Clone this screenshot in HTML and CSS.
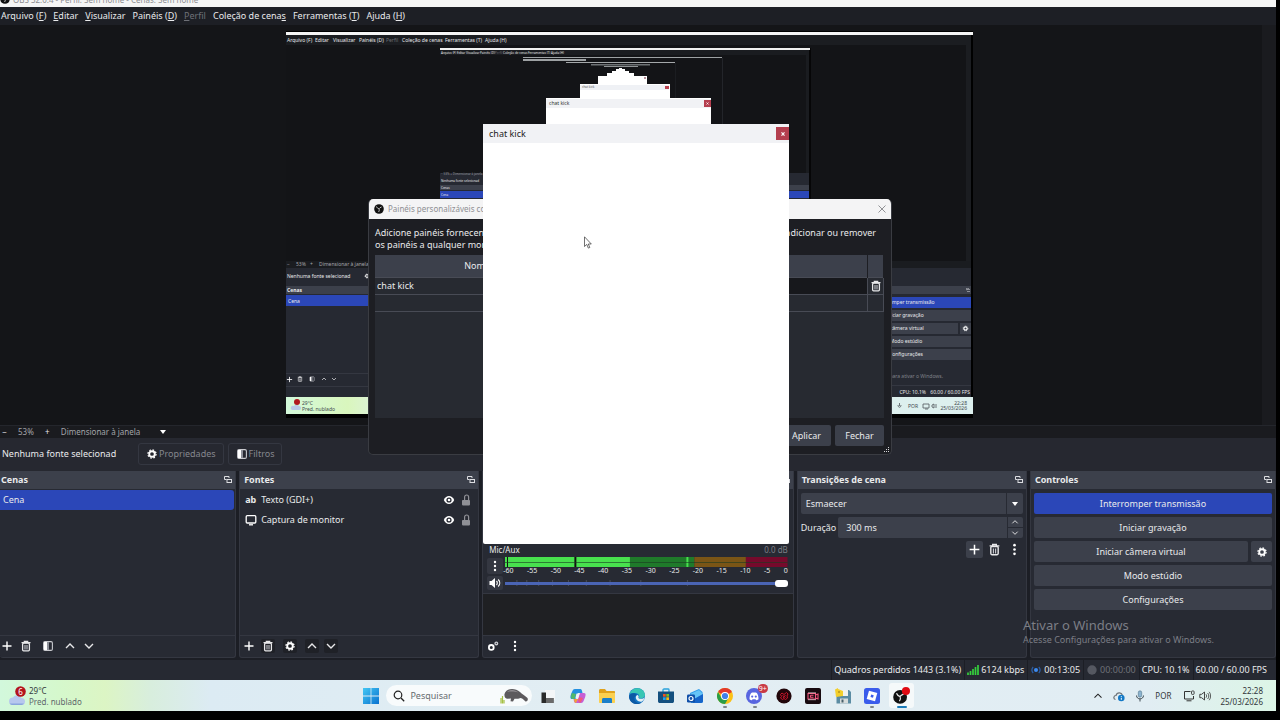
FILE: index.html
```html
<!DOCTYPE html>
<html lang="pt-BR">
<head>
    <meta charset="UTF-8">
    <meta name="viewport" content="width=device-width, initial-scale=1.0">
    <title>OBS</title>
    <link rel="stylesheet" href="styles.css">
</head>
<body>
    <svg class="sprite" aria-hidden="true">
        <symbol id="i-plus" viewBox="0 0 12 12"><path d="M6 1.500v9M1.500 6h9" stroke="#fff" stroke-width="1.400" fill="none"/></symbol>
        <symbol id="i-trash" viewBox="0 0 12 12"><path d="M1.500 2.600h9M4.300 2.400V1.300h3.400v1.100" stroke="#e8e8ea" stroke-width="1.200" fill="none"/><rect x="2.600" y="3.200" width="6.800" height="7.600" rx="1" fill="none" stroke="#e8e8ea" stroke-width="1.300"/><path d="M5 5v4.600M7 5v4.600" stroke="#c4c5ca" stroke-width="1.100"/></symbol>
        <symbol id="i-filter" viewBox="0 0 12 12"><rect x="1.600" y="1.600" width="8.800" height="8.800" rx="1.400" fill="none" stroke="#c9cacf" stroke-width="1.100"/><rect x="2" y="2" width="3" height="8" fill="#fff"/><rect x="5" y="2" width="2" height="8" fill="#8d9099"/></symbol>
        <symbol id="i-up" viewBox="0 0 12 12"><path d="M2 8l4-4 4 4" stroke="#e8e8ea" stroke-width="1.400" fill="none"/></symbol>
        <symbol id="i-down" viewBox="0 0 12 12"><path d="M2 4l4 4 4-4" stroke="#e8e8ea" stroke-width="1.400" fill="none"/></symbol>
        <symbol id="i-dots" viewBox="0 0 12 12"><circle cx="6" cy="2" r="1.200" fill="#fff"/><circle cx="6" cy="6" r="1.200" fill="#fff"/><circle cx="6" cy="10" r="1.200" fill="#fff"/></symbol>
        <symbol id="i-gear" viewBox="0 0 12 12"><circle cx="6" cy="6" r="2.800" fill="none" stroke="#fff" stroke-width="1.900"/><circle cx="6" cy="6" r="4.100" fill="none" stroke="#fff" stroke-width="1.200" stroke-dasharray="1.700 1.520"/></symbol>
        <symbol id="i-float" viewBox="0 0 8 8"><path d="M.500 3.500v-3h4.500v1.500M.500 3.500h2" stroke="#dcdde1" fill="none"/><rect x="3" y="3.500" width="4.500" height="3" fill="none" stroke="#dcdde1"/></symbol>
        <symbol id="i-eye" viewBox="0 0 12 12"><path d="M.8 6C3 .8 9 .8 11.200 6 9 11.200 3 11.200.8 6z" fill="#fff"/><circle cx="6" cy="6" r="2.600" fill="#272a33"/><circle cx="6" cy="6" r="1.300" fill="#fff"/></symbol>
        <symbol id="i-lock" viewBox="0 0 12 12"><rect x="2" y="6" width="8" height="5.400" rx=".8" fill="#8f9096"/><path d="M4.600 6V3a2 2 0 0 1 4 0v3" stroke="#8f9096" stroke-width="1.200" fill="none"/></symbol>
        <symbol id="i-obs" viewBox="0 0 20 20"><circle cx="10" cy="10" r="9.600" fill="#111"/><path d="M5 5c1 3 3 4 5 4.500M15 6c-2 1-4 1.500-5 3.500M9 16c1.500-2 2-4 1-6.500" stroke="#e6e6e6" stroke-width="1.700" fill="none"/></symbol>
    </svg>

    <div class="screen">
        <div class="titlebar">
            <svg class="obs-small"><use href="#i-obs"/></svg>
            <span>OBS 32.0.4 - Perfil: Sem nome - Cenas: Sem nome</span>
        </div>
        <nav class="menubar">
            <button>Arquivo (<u>F</u>)</button>
            <button><u>E</u>ditar</button>
            <button><u>V</u>isualizar</button>
            <button>Painéis (<u>D</u>)</button>
            <button disabled><u>P</u>erfil</button>
            <button>Coleção de cena<u>s</u></button>
            <button>Ferramentas (<u>T</u>)</button>
            <button>Ajuda (<u>H</u>)</button>
        </nav>

        <div class="preview">
            <div class="canvas">
                <svg class="monitor" viewBox="286 31 687 387">
                    <defs>
                        <linearGradient id="bar"><stop offset="0" stop-color="#d3f8da"/><stop offset=".09" stop-color="#d9f6bd"/><stop offset=".16" stop-color="#dfeeee"/><stop offset="1" stop-color="#ddf0ee"/></linearGradient>
                    </defs>
                    <rect x="286" y="31" width="687" height="387" fill="#000"/>
                    <rect x="286" y="32" width="687" height="3" fill="#f5f5f5"/>
                    <rect x="286" y="35" width="685" height="226" fill="#1b1d21"/>
                    <rect x="286" y="45" width="680" height="216" fill="#131417"/>
                    <g class="t5 white">
                        <text x="287" y="42">Arquivo (F)</text><text x="315" y="42">Editar</text><text x="333" y="42">Visualizar</text><text x="359" y="42">Painéis (D)</text><text x="386" y="42" fill="#6c6e75">Perfil</text><text x="402" y="42">Coleção de cenas</text><text x="445" y="42">Ferramentas (T)</text><text x="485" y="42">Ajuda (H)</text>
                    </g>
                    <!-- second level -->
                    <rect x="440" y="48" width="371" height="152" fill="#060607"/>
                    <rect x="440" y="48" width="370" height="2" fill="#f0f0f0"/>
                    <rect x="440" y="50" width="369" height="150" fill="#1a1c20"/>
                    <rect x="440" y="55" width="366" height="118" fill="#131417"/>
                    <g class="t3 white">
                        <text x="441" y="54">Arquivo (F)</text><text x="457" y="54">Editar</text><text x="466" y="54">Visualizar</text><text x="480" y="54">Painéis (D)</text><text x="495" y="54" fill="#6c6e75">Perfil</text><text x="503" y="54">Coleção de cenas</text><text x="528" y="54">Ferramentas (T)</text><text x="551" y="54">Ajuda (H)</text>
                    </g>
                    <rect x="440" y="173" width="369" height="27" fill="#262932"/>
                    <rect x="440" y="185" width="369" height="5" fill="#3c404b"/>
                    <rect x="440" y="191" width="369" height="7" fill="#2b47b8"/>
                    <g class="t3 white">
                        <text x="441" y="175" fill="#9a9ba0">−  53%  +  Dimensionar à janela</text>
                        <text x="441" y="182">Nenhuma fonte selecionad</text>
                        <text x="441" y="189">Cenas</text>
                        <text x="441" y="196">Cena</text>
                    </g>
                    <!-- deeper levels -->
                    <path d="M523 57h199v1H523zM523 59h63v2h-63z" fill="#9da1a3"/>
                    <path d="M722.500 58v66" stroke="#23252a"/>
                    <path d="M566 62h109v1H566z" fill="#a4a8aa"/>
                    <path d="M675.500 63v50" stroke="#1b1d21"/>
                    <path d="M591 64h59v1.500h-59z" fill="#6e7275"/>
                    <path d="M604 66h34v1h-34z" fill="#8f9395"/>
                    <path d="M616 69h3v-1h3v1h3v2h4v2h5v3h12v7h-48v-7h9v-3h5v-2h4z" fill="#fff"/>
                    <rect x="598" y="76" width="49" height="8" fill="#fff"/>
                    <rect x="580" y="84" width="90" height="15" fill="#fff"/>
                    <rect x="580" y="85" width="89" height="5" fill="#eff1f5"/>
                    <text class="t3" x="582" y="88" fill="#555">chat kick</text>
                    <rect x="665" y="86" width="4" height="3" fill="#b8404e"/>
                    <rect x="644" y="77" width="2" height="2" fill="#b8909a"/>
                    <rect x="546" y="98" width="165" height="30" fill="#fff"/>
                    <rect x="546" y="99" width="165" height="9" fill="#f1f2f5"/>
                    <text class="t5" x="549" y="105" fill="#333">chat kick</text>
                    <rect x="704" y="100" width="7" height="7" fill="#b43f4f"/>
                    <path d="M706.500 102.500l2 2m0-2l-2 2" stroke="#fff" stroke-width=".8"/>
                    <!-- first level docks -->
                    <rect x="286" y="268" width="685" height="131" fill="#262932"/>
                    <rect x="286" y="261" width="685" height="7" fill="#1a1c20"/>
                    <rect x="286" y="286" width="685" height="8" fill="#3c404b"/>
                    <rect x="286" y="295" width="130" height="11" fill="#2b47b8"/>
                    <path d="M286 373.500h90M286 386.500h90M880 385.500h91" stroke="#343741"/>
                    <g class="t5 white">
                        <text x="287" y="266" fill="#a5a6ab">−</text><text x="296" y="266" fill="#a5a6ab">53%</text><text x="310" y="266" fill="#a5a6ab">+</text><text x="319" y="266" fill="#a5a6ab">Dimensionar à janela</text>
                        <text x="287" y="278">Nenhuma fonte selecionad</text>
                        <text x="287" y="292" font-weight="700">Cenas</text>
                        <text x="288" y="303">Cena</text>
                    </g>
                    <use href="#i-gear" x="364" y="273" width="6" height="6"/>
                    <use href="#i-plus" x="286" y="376" width="7" height="7"/>
                    <use href="#i-trash" x="297" y="376" width="6" height="6"/>
                    <use href="#i-filter" x="309" y="376" width="6" height="6"/>
                    <use href="#i-up" x="321" y="376" width="6" height="6"/>
                    <use href="#i-down" x="331" y="376" width="6" height="6"/>
                    <use href="#i-float" x="966" y="288" width="4" height="4"/>
                    <rect x="842" y="297" width="129" height="11" fill="#2b47b8"/>
                    <path d="M842 310h129v11H842zM842 323h116v11H842zM960 323h11v11h-11zM842 336h129v11H842zM842 349h129v11H842z" fill="#3c404b"/>
                    <use href="#i-gear" x="962" y="325" width="7" height="7"/>
                    <g class="t5 white" text-anchor="middle">
                        <text x="905" y="304">Interromper transmissão</text><text x="905" y="317">Iniciar gravação</text><text x="899" y="330">Iniciar câmera virtual</text><text x="906" y="343">Modo estúdio</text><text x="906" y="356">Configurações</text>
                    </g>
                    <g class="t5 white" text-anchor="end">
                        <text x="943" y="378" fill="#80828a">Acesse Configurações para ativar o Windows.</text>
                        <text x="926" y="394">CPU: 10.1%</text><text x="970" y="394">60.00 / 60.00 FPS</text>
                    </g>
                    <rect x="286" y="397" width="687" height="17" fill="url(#bar)"/>
                    <rect x="286" y="414" width="687" height="4" fill="#000"/>
                    <path d="M292 410h7a2 2 0 0 0 0-4 3 3 0 0 0-5 0 2 2 0 0 0-2 4z" fill="#b9c9e6"/>
                    <circle cx="297" cy="402" r="3" fill="#b0181f"/>
                    <g class="t5" fill="#41484d">
                        <text x="302" y="405">29°C</text><text x="302" y="411">Pred. nublado</text>
                        <text x="908" y="408">POR</text><text x="967" y="405" text-anchor="end">22:28</text><text x="967" y="410" text-anchor="end">25/03/2026</text>
                    </g>
                    <path d="M899.500 403v3M898 405c0 3 3 3 3 0M923 404h6v4h-6zM925 409h3M932 405l2-1v4l-2-1zM936 404v4" stroke="#50575c" fill="none" stroke-width=".8"/>
                </svg>
            </div>
            <div class="scroll-v"></div>
        </div>
        <div class="zoombar">
            <button aria-label="Reduzir">−</button>
            <span>53%</span>
            <button aria-label="Ampliar">+</button>
            <select aria-label="Escala"><option>Dimensionar à janela</option></select>
            <i class="caret"></i>
        </div>
        <div class="sourcebar">
            <span class="source-name">Nenhuma fonte selecionad</span>
            <button disabled><svg><use href="#i-gear"/></svg>Propriedades</button>
            <button disabled><svg><use href="#i-filter"/></svg>Filtros</button>
        </div>

        <main class="docks">
            <section class="dock scenes">
                <h2>Cenas<svg><use href="#i-float"/></svg></h2>
                <ul class="list">
                    <li class="selected">Cena</li>
                </ul>
                <div class="tools">
                    <button aria-label="Adicionar"><svg><use href="#i-plus"/></svg></button>
                    <button aria-label="Remover"><svg><use href="#i-trash"/></svg></button>
                    <button class="apart" aria-label="Filtros"><svg><use href="#i-filter"/></svg></button>
                    <button class="apart" aria-label="Subir"><svg><use href="#i-up"/></svg></button>
                    <button aria-label="Descer"><svg><use href="#i-down"/></svg></button>
                </div>
            </section>

            <section class="dock sources">
                <h2>Fontes<svg><use href="#i-float"/></svg></h2>
                <ul class="list">
                    <li><b class="ab">ab</b><span>Texto (GDI+)</span>
                        <button aria-label="Visível"><svg><use href="#i-eye"/></svg></button>
                        <button aria-label="Bloquear"><svg><use href="#i-lock"/></svg></button></li>
                    <li><svg viewBox="0 0 12 12"><rect x="1.200" y="1.700" width="9.600" height="7.300" rx="1" fill="none" stroke="#fff" stroke-width="1.300"/><path d="M4 10.800h4" stroke="#fff" stroke-width="1.300"/></svg><span>Captura de monitor</span>
                        <button aria-label="Visível"><svg><use href="#i-eye"/></svg></button>
                        <button aria-label="Bloquear"><svg><use href="#i-lock"/></svg></button></li>
                </ul>
                <div class="tools dark">
                    <button aria-label="Adicionar"><svg><use href="#i-plus"/></svg></button>
                    <button aria-label="Remover"><svg><use href="#i-trash"/></svg></button>
                    <button class="apart" aria-label="Propriedades"><svg><use href="#i-gear"/></svg></button>
                    <button class="apart" aria-label="Subir"><svg><use href="#i-up"/></svg></button>
                    <button aria-label="Descer"><svg><use href="#i-down"/></svg></button>
                </div>
            </section>

            <section class="dock mixer">
                <h2><svg><use href="#i-float"/></svg></h2>
                <div class="channel">
                    <div class="channel-head"><label for="vol">Mic/Aux</label><span>0.0 dB</span></div>
                    <div class="channel-row">
                        <button aria-label="Opções"><svg><use href="#i-dots"/></svg></button>
                        <div class="meter">
                            <svg viewBox="0 0 285 10" preserveAspectRatio="none">
                                <path d="M0 0h191v10H0z" fill="#1f7a2a"/>
                                <path d="M191 0h52v10h-52z" fill="#7a5516"/>
                                <path d="M243 0h42v10h-42z" fill="#760a2c"/>
                                <path d="M0 0h126v10H0zM183 0h2v10h-2z" fill="#48e14e"/>
                                <path d="M2 0h1v10H2zM70 0h2v10h-2z" fill="#111"/>
                                <path d="M0 5h285v1H0z" fill="#1a3a22" opacity=".6"/>
                            </svg>
                            <div class="ticks"><span>-60</span><span>-55</span><span>-50</span><span>-45</span><span>-40</span><span>-35</span><span>-30</span><span>-25</span><span>-20</span><span>-15</span><span>-10</span><span>-5</span><span>0</span></div>
                        </div>
                    </div>
                    <div class="channel-row">
                        <button aria-label="Silenciar"><svg viewBox="0 0 12 12"><path d="M.5 4h2L6 1v10L2.500 8h-2z" fill="#fff"/><path d="M7.500 4c1 1 1 3 0 4M9.200 2.500c2 2 2 5 0 7" stroke="#fff" stroke-width="1.200" fill="none"/></svg></button>
                        <div class="volume">
                            <svg viewBox="0 0 285 8" preserveAspectRatio="none"><path d="M12 1v6M22 1v6M34 1v6M48 1v6M64 1v6M82 1v6M106 1v6M137 1v6M184 1v6" stroke="#4a4e5a"/></svg>
                            <input id="vol" type="range" min="0" max="100" value="100">
                        </div>
                    </div>
                </div>
                <div class="mixer-empty"></div>
                <div class="tools">
                    <button aria-label="Propriedades de áudio"><svg viewBox="0 0 12 12"><circle cx="4.300" cy="7.400" r="2.400" fill="none" stroke="#fff" stroke-width="1.800"/><circle cx="9.300" cy="3.400" r="1.300" fill="none" stroke="#c9cacf" stroke-width="1.400"/></svg></button>
                    <button class="apart" aria-label="Menu"><svg><use href="#i-dots"/></svg></button>
                </div>
            </section>

            <section class="dock transitions">
                <h2>Transições de cena<svg><use href="#i-float"/></svg></h2>
                <div class="form">
                    <div class="combo">
                        <select aria-label="Transição"><option>Esmaecer</option></select>
                        <i class="caret"></i>
                    </div>
                    <div class="duration">
                        <label for="dur">Duração</label>
                        <div class="spin">
                            <input id="dur" type="text" value="300 ms">
                            <div class="arrows">
                                <button aria-label="Mais"><svg><use href="#i-up"/></svg></button>
                                <button aria-label="Menos"><svg><use href="#i-down"/></svg></button>
                            </div>
                        </div>
                    </div>
                    <div class="form-tools">
                        <button class="filled" aria-label="Adicionar"><svg><use href="#i-plus"/></svg></button>
                        <button aria-label="Remover"><svg><use href="#i-trash"/></svg></button>
                        <button aria-label="Menu"><svg><use href="#i-dots"/></svg></button>
                    </div>
                </div>
            </section>

            <section class="dock controls">
                <h2>Controles<svg><use href="#i-float"/></svg></h2>
                <div class="form">
                    <button class="btn active">Interromper transmissão</button>
                    <button class="btn">Iniciar gravação</button>
                    <div class="pair">
                        <button class="btn">Iniciar câmera virtual</button>
                        <button class="btn" aria-label="Configurar câmera"><svg><use href="#i-gear"/></svg></button>
                    </div>
                    <button class="btn">Modo estúdio</button>
                    <button class="btn">Configurações</button>
                </div>
                <div class="watermark"><strong>Ativar o Windows</strong><span>Acesse Configurações para ativar o Windows.</span></div>
            </section>
        </main>

        <footer class="status">
            <span>Quadros perdidos 1443 (3.1%)</span>
            <span><svg viewBox="0 0 12 12"><path d="M1 11V8.500M3.500 11V7M6 11V5M8.500 11V3M11 11V1" stroke="#36cf3d" stroke-width="1.700"/></svg>6124 kbps</span>
            <span><svg viewBox="0 0 12 12"><circle cx="6" cy="6" r="2" fill="#3d8bf2"/><path d="M3.200 3c-1.600 1.800-1.600 4.200 0 6M8.800 3c1.600 1.800 1.600 4.200 0 6" stroke="#2b5ea8" stroke-width="1.200" fill="none"/></svg>00:13:05</span>
            <span class="off"><svg viewBox="0 0 12 12"><circle cx="6" cy="6" r="4.700" fill="#555861"/></svg>00:00:00</span>
            <span>CPU: 10.1%</span>
            <span>60.00 / 60.00 FPS</span>
        </footer>

        <div class="taskbar">
            <div class="weather">
                <svg viewBox="0 0 18 20"><path d="M4 19h9.500a3.500 3.500 0 0 0 0-7 5 5 0 0 0-8.500-.5A3.800 3.800 0 0 0 4 19z" fill="#b7c8ee"/><path d="M4 19h9.500a3.500 3.500 0 0 0 2.500-1.500H1.500A3.500 3.500 0 0 0 4 19z" fill="#8aa6dd"/><circle cx="12.500" cy="5.500" r="5.300" fill="#b3141c"/><text x="12.500" y="8.500" text-anchor="middle" font-size="8" fill="#fff">6</text></svg>
                <div><span>29°C</span><span>Pred. nublado</span></div>
            </div>
            <div class="apps">
                <button aria-label="Iniciar"><svg viewBox="0 0 16 16"><defs><linearGradient id="win" x2="1" y2="1"><stop stop-color="#43c7f4"/><stop offset="1" stop-color="#0b72cf"/></linearGradient></defs><path d="M0 0h7.600v7.600H0zM8.400 0H16v7.600H8.400zM0 8.400h7.600V16H0zM8.400 8.400H16V16H8.400z" fill="url(#win)"/></svg></button>
                <div class="search">
                    <svg viewBox="0 0 12 12"><circle cx="5" cy="5" r="3.800" fill="none" stroke="#222" stroke-width="1.200"/><path d="M8 8l3.200 3.200" stroke="#222" stroke-width="1.300"/></svg>
                    <input type="text" placeholder="Pesquisar" aria-label="Pesquisar">
                    <svg class="manatee" viewBox="0 0 28 16"><path d="M4.500 6C6 0 15-.5 20 4c2 2 4.500 3.500 7.500 6 1 2-.5 4-2 3.500-1.500-1-2.500-3-5-3.500-2 .8-4 1-6 .8l-1.500 2.700-2.500-.3.500-2.700-3 .3c-2.500.3-4-1.800-3.500-4.800z" fill="#5c5a5d"/><path d="M7 4c3-3 8-2.500 11.500.5C15 3.500 10 3.200 7 4z" fill="#918e92"/><path d="M1 15.500V10M2.500 15.500V8M4 15.500V12" stroke="#a5c043" stroke-width="1.200"/></svg>
                </div>
                <button aria-label="Visão de tarefas"><svg viewBox="0 0 16 16"><path d="M5 2h10v10H5z" fill="#f4f6f7"/><path d="M1.500 4.500H6V10h7.500v5h-12z" fill="#2a2a2a"/><path d="M6 10h7.500v5H6z" fill="#6a6a6a"/></svg></button>
                <button aria-label="Copilot"><svg viewBox="0 0 16 16"><path d="M5 1h5c2 0 2 2 2.500 4H8L6 11H2C-1 11 1 6 2 4c.6-1.500 1-3 3-3z" fill="#2390e0"/><path d="M2 11c-1.500-1-1-4 0-6l4 1-1.500 5z" fill="#53b96a"/><path d="M11 15H6c-2 0-2-2-2.500-4H8l2-6h4c3 0 1 5 0 7-.6 1.500-1 3-3 3z" fill="#c55fd6"/><path d="M4 11h4l-2 4c-1.500 0-2-2-2-4z" fill="#f2a03c"/><path d="M10 15c1.500-1 2-3 3-5l-4-1-1 4z" fill="#ee5a7c"/><path d="M6.500 5.500h3l-1.400 5h-2.800z" fill="#eef3f6"/></svg></button>
                <button aria-label="Explorador"><svg viewBox="0 0 16 16"><path d="M0 2.500C0 1.600.5 1 1.500 1H6l1.500 2H15c.6 0 1 .4 1 1v3H0z" fill="#e0a21c"/><path d="M0 5h16v9c0 .6-.4 1-1 1H1c-.6 0-1-.4-1-1z" fill="#fbd04f"/><path d="M3 15v-3.500c0-.8.500-1.500 1.500-1.500h7c1 0 1.500.7 1.500 1.500V15z" fill="#1b7fc9"/></svg></button>
                <button aria-label="Edge"><svg viewBox="0 0 16 16"><circle cx="8" cy="8" r="8" fill="#1274c4"/><path d="M.6 6C2.500-1.500 15-2 16 7c0 3-4 4-6 3 1-3-1-5-4-5-2.500 0-4.500 0-5.400 1z" fill="#38c6b4"/><path d="M0 9c0-4 6-5 8-2-3 1-4 5 0 7.500 1.500.9 3.500.6 5-.2C8 18.500.5 15 0 9z" fill="#0c59a4"/><path d="M6.800 9.500c0-1.500 1-2.500 1.800-2.600 1.600.8 1 2 .8 3.100 1.600 1.400 4.800 1 6.200-.4-.4 2-1.600 3.200-2.600 3.800-3 1-6.200-1.400-6.200-3.900z" fill="#e3f0f4"/></svg></button>
                <button aria-label="Loja"><svg viewBox="0 0 16 16"><path d="M5 4V1.800C5 1.200 5.500 1 6 1h4c.5 0 1 .2 1 .8V4" stroke="#2aa3dc" stroke-width="1.300" fill="none"/><path d="M0 3.500h16V13c0 1.500-.7 2-2 2H2c-1.300 0-2-.5-2-2z" fill="#14507f"/><path d="M5 6h2.700v2.700H5z" fill="#f05323"/><path d="M8.300 6H11v2.700H8.300z" fill="#7dba22"/><path d="M5 9.300h2.700V12H5z" fill="#22a5ea"/><path d="M8.300 9.300H11V12H8.300z" fill="#fdb813"/></svg></button>
                <button aria-label="Outlook"><svg viewBox="0 0 16 16"><path d="M3 5l9-4 3.500 3L16 13c0 1-.6 2-2 2H4z" fill="#2f9bea"/><path d="M3 6l9-4 4 4-8 5z" fill="#65c4f7"/><path d="M7 11l9-5v7c0 1-.6 2-2 2H6z" fill="#1564c9"/><rect y="6.500" width="8" height="8" rx="1.300" fill="#0f4fa8"/><circle cx="4" cy="10.500" r="2" fill="none" stroke="#fff" stroke-width="1.200"/></svg></button>
                <button class="open" aria-label="Chrome"><svg viewBox="0 0 16 16"><circle cx="8" cy="8" r="8" fill="#fbc116"/><path d="M8 8L1.070 4A8 8 0 0 1 14.930 4z" fill="#e2392c"/><path d="M1.070 4A8 8 0 0 0 8 16l3.500-6L8 8 4.500 10z" fill="#2a9d48"/><circle cx="8" cy="8" r="4" fill="#fff"/><circle cx="8" cy="8" r="3.100" fill="#3f80ea"/></svg></button>
                <button class="open badge" aria-label="Discord"><svg viewBox="0 0 16 16"><circle cx="8" cy="8" r="8" fill="#5865e0"/><path d="M3.500 11.200c0-3 .7-5 1.500-6 1-.6 1.500-.6 2-.6h2c.5 0 1 0 2 .6.800 1 1.500 3 1.500 6-.8.700-1.700 1-2.400 1l-.6-1h-3l-.6 1c-.7 0-1.600-.3-2.400-1z" fill="#fff"/><circle cx="6.200" cy="8.600" r="1.100" fill="#5865e0"/><circle cx="9.800" cy="8.600" r="1.100" fill="#5865e0"/></svg><em>9+</em></button>
                <button aria-label="App"><svg viewBox="0 0 16 16"><circle cx="8" cy="8" r="7.600" fill="#21060a"/><path d="M4.500 6.500L6 5l2 1.500L10.500 4.500 12 6l-1 2 .5 2-2 1.500-1.500-1-1.500 1L4.500 10l1-1.500zM6.500 7.500l3 2M9.500 7L7 10" fill="none" stroke="#c9152b"/></svg></button>
                <button aria-label="Gravador"><svg viewBox="0 0 16 16"><rect width="16" height="16" rx="2" fill="#180b10"/><path d="M3 5.500h7.500v5.500H3zM10.500 7l2.500-1v5l-2.500-1M5.500 7.300h3M5.500 7.300v2h3" fill="none" stroke="#f2557c" stroke-width="1.100"/><path d="M3 4.800h8M3 11.700h8" stroke="#fff" stroke-width=".6"/></svg></button>
                <button aria-label="Disquete"><svg viewBox="0 0 16 16"><path d="M1.500 2H14l2 2v11.500H1.500z" fill="#5b8ca3"/><path d="M5 2h8v6H5z" fill="#f2f2ec"/><path d="M5 10.500h8v5H5z" fill="#d7dcdc"/><path d="M6.500 11.500h2v3h-2z" fill="#48606c"/><path d="M0 1.500L3 0v1l5 2v5L1 9z" fill="#f3cf2b"/><circle cx="4" cy="4" r=".8" fill="#8a6a10"/></svg></button>
                <button class="open" aria-label="Roblox"><svg viewBox="0 0 16 16"><rect width="16" height="16" rx="2.500" fill="#3a5ceb"/><path d="M5 2.700l8.300 2.300L11 13.300 2.700 11z" fill="#fff"/><path d="M7.200 6.500l2.500.7L9 9.700 6.500 9z" fill="#3a5ceb"/></svg></button>
                <button class="current" aria-label="OBS Studio"><svg viewBox="0 0 20 20"><use href="#i-obs" x="1" y="3" width="16" height="16"/><circle cx="15.500" cy="4.500" r="4.500" fill="#e00a12"/></svg></button>
            </div>
            <div class="tray">
                <svg viewBox="0 0 12 12"><path d="M2.500 7.700L6 4.200l3.500 3.500" stroke="#222" stroke-width="1.100" fill="none"/></svg>
                <svg viewBox="0 0 12 12"><path d="M2.500 9.500C0 9 .5 5.500 3 5.500 4 2 8.500 2 9.300 5" stroke="#6d7377" stroke-width="1.200" fill="none"/><circle cx="8.300" cy="8" r="3.300" fill="#1379c6"/><path d="M8.300 6.200v.9M8.300 7.800v2" stroke="#fff"/></svg>
                <svg viewBox="0 0 12 12"><rect x="4.300" y=".8" width="3.400" height="6.400" rx="1.700" fill="#8bb3cf" stroke="#51748c" stroke-width=".6"/><path d="M2.500 5.500c0 4.500 7 4.500 7 0M6 9v2.500" stroke="#3e4a52" fill="none"/></svg>
                <span>POR</span>
                <svg viewBox="0 0 12 12"><path d="M7.500 1.500h-6v7.500h9V6M3.500 10.800h5" stroke="#333" fill="none"/><rect x="8.500" y="1" width="2.600" height="3.400" rx=".7" fill="none" stroke="#333" stroke-width=".9"/></svg>
                <svg viewBox="0 0 12 12"><path d="M.8 4.300h1.800L5.500 2v8L2.600 7.700H.8z" fill="none" stroke="#333" stroke-width=".9"/><path d="M7 4.300c.8 1 .8 2.400 0 3.400M8.600 3c1.600 1.700 1.600 4.300 0 6M10.100 1.800c2 2.400 2 6 0 8.400" stroke="#333" stroke-width=".8" fill="none"/></svg>
                <div class="clock"><span>22:28</span><span>25/03/2026</span></div>
            </div>
        </div>

        <div class="dialog">
            <header>
                <svg class="obs-small"><use href="#i-obs"/></svg>
                <span>Painéis personalizáveis com navegador</span>
                <button aria-label="Fechar"><svg viewBox="0 0 8 8"><path d="M.5.5l7 7m0-7l-7 7" stroke="#85868a" stroke-width=".9"/></svg></button>
            </header>
            <div class="dialog-body">
                <div class="help">
                    <p><span>Adicione painéis fornecendo</span><span>adicionar ou remover</span></p>
                    <p>os painéis a qualquer momento.</p>
                </div>
                <div class="table-box">
                    <table>
                        <thead><tr><th>Nome do painel</th><th>URL</th><th class="del"></th></tr></thead>
                        <tbody>
                            <tr><td>chat kick</td><td class="edit"></td><td class="del"><button aria-label="Excluir"><svg><use href="#i-trash"/></svg></button></td></tr>
                            <tr><td></td><td></td><td class="del"></td></tr>
                        </tbody>
                    </table>
                </div>
                <div class="dialog-buttons">
                    <button class="btn">Aplicar</button>
                    <button class="btn">Fechar</button>
                </div>
            </div>
            <svg class="grip" viewBox="0 0 6 6"><path d="M4 0h1v1H4zM2 2h1v1H2zM4 2h1v1H4zM0 4h1v1H0zM2 4h1v1H2zM4 4h1v1H4z" fill="#d6d7da"/></svg>
        </div>

        <div class="popup">
            <header><span>chat kick</span><button aria-label="Fechar"><svg viewBox="0 0 6 6"><path d="M1.500 1.300l3 3.400m0-3.400l-3 3.400" stroke="#fff" stroke-width="1.100"/></svg></button></header>
        </div>
        <svg class="cursor" viewBox="0 0 8 13"><path d="M.5.8v9.700l2.300-2.100 1.500 3.700 1.500-.6-1.500-3.500h3z" fill="#fff" stroke="#333" stroke-width=".7"/></svg>
    </div>
</body>
</html>
```
FILE: styles.css
```css
* {
    box-sizing: border-box;
}
body {
    margin: 0;
    background: #000;
    color: #e9eaec;
    font-family: "Noto Sans", "Open Sans", sans-serif;
    font-size: 9px;
    line-height: 12px;
}
button, input, select {
    font: inherit;
    color: inherit;
    background: none;
    border: 0;
    margin: 0;
    padding: 0;
    outline: 0;
}
select {
    appearance: none;
}
svg {
    display: block;
    flex: none;
    width: 12px;
    height: 12px;
}
.sprite {
    position: absolute;
    width: 0;
    height: 0;
}
.screen {
    position: relative;
    display: flex;
    flex-direction: column;
    min-height: 100vh;
    border-right: 4px solid #000;
    border-bottom: 9px solid #000;
    background: #1c1e25;
}
.obs-small {
    width: 10px;
    height: 10px;
}

/* top bars */
.titlebar {
    display: flex;
    align-items: flex-end;
    gap: 3px;
    height: 7px;
    padding-bottom: 1px;
    overflow: hidden;
    background: #f5f5f5;
    color: #8b8c90;
    font-size: 8px;
}
.titlebar .obs-small {
    margin-bottom: 2px;
}
.menubar {
    display: flex;
    align-items: center;
    gap: 7px;
    height: 18px;
    padding-left: 1px;
    background: #1d1f25;
}
.menubar button:disabled {
    color: #6e7077;
}

/* preview */
.preview {
    display: flex;
    flex: 1;
    min-height: 400px;
    background: #141518;
}
.canvas {
    display: flex;
    flex: 1;
    align-items: center;
    justify-content: center;
    padding: 0 3px 2px 0;
}
.monitor {
    width: 687px;
    height: 387px;
}
.t5 {
    font-size: 5px;
}
.t3 {
    font-size: 3px;
}
.white {
    fill: #e9eaec;
}
.scroll-v {
    width: 14px;
    background: #1a1b1f;
}
.zoombar {
    display: flex;
    align-items: center;
    gap: 11px;
    height: 13px;
    padding-left: 2px;
    border-top: 1px solid #24262c;
    background: #1a1b1f;
    color: #a3a4a9;
    font-size: 8px;
}
.zoombar button {
    width: 5px;
    color: #e9eaec;
}
.zoombar select {
    width: 88px;
}
.caret {
    border: 3px solid transparent;
    border-top: 4px solid #fff;
    border-bottom: 0;
}
.sourcebar {
    display: flex;
    align-items: center;
    gap: 4px;
    height: 33px;
    padding: 0 2px 2px;
    background: #262830;
}
.source-name {
    width: 132px;
    white-space: nowrap;
}
.sourcebar button {
    display: flex;
    align-items: center;
    gap: 1px;
    height: 22px;
    padding: 0 7px;
    border: 1px solid #343741;
    border-radius: 3px;
    color: #85878e;
}

/* docks */
.docks {
    display: flex;
    gap: 3px;
    height: 187px;
}
.dock {
    display: flex;
    flex-direction: column;
    min-width: 0;
    border: 1px solid #343741;
    border-top: 0;
    border-radius: 0 0 3px 3px;
    background: #272a33;
}
.scenes {
    flex: 237 1 0;
    border-left: 0;
}
.sources {
    flex: 240 1 0;
}
.mixer {
    flex: 312 1 0;
}
.transitions {
    flex: 230 1 0;
}
.controls {
    flex: 246 1 0;
    position: relative;
}
.dock h2 {
    display: flex;
    align-items: center;
    justify-content: space-between;
    height: 18px;
    margin: 0;
    padding: 0 3px 0 4px;
    background: #3c404b;
    font-size: 9px;
    font-weight: 700;
}
.dock h2 svg {
    width: 8px;
    height: 8px;
    margin-left: auto;
}
.scenes h2 {
    padding-left: 1px;
}
.list {
    flex: 1;
    margin: 0;
    padding: 1px 1px 0 0;
    list-style: none;
}
.list li {
    display: flex;
    align-items: center;
    gap: 4px;
    height: 20px;
    padding: 0 5px;
}
.list li span {
    flex: 1;
}
.list li.selected {
    padding-left: 3px;
    border-radius: 0 3px 3px 0;
    background: #2b47b8;
}
.sources li button + button {
    margin-left: 1px;
}
.ab {
    width: 12px;
}
.tools {
    display: flex;
    align-items: center;
    gap: 5px;
    height: 22px;
    padding-bottom: 1px;
    border-top: 1px solid #343741;
}
.tools button {
    padding: 1px;
    border-radius: 2px;
}
.tools .apart {
    margin-left: 3px;
}
.sources .tools {
    padding-left: 2px;
}
.tools.dark button + button {
    background: #1f2127;
}
.mixer .tools {
    padding-left: 3px;
}

/* mixer */
.mixer h2 {
    margin-bottom: 55px;
}
.channel {
    padding: 0 5px 3px 4px;
    border-bottom: 1px solid #343741;
}
.channel-head {
    display: flex;
    justify-content: space-between;
    padding-left: 2px;
    font-size: 8px;
}
.channel-head span {
    color: #7d7f86;
}
.channel-row {
    display: flex;
    align-items: center;
    gap: 2px;
}
.channel-row button {
    padding: 2px;
    border-radius: 2px;
    background: #343741;
}
.channel-row + .channel-row button {
    padding: 1px 2px;
}
.channel-row + .channel-row {
    margin-top: 1px;
}
.meter {
    flex: 1;
    padding-top: 1px;
}
.meter svg {
    width: 100%;
    height: 10px;
}
.ticks {
    display: flex;
    justify-content: space-between;
    height: 8px;
    margin-left: -2px;
    font-size: 7px;
    line-height: 8px;
}
.volume {
    display: grid;
    flex: 1;
}
.volume svg, .volume input {
    grid-area: 1 / 1;
    width: 100%;
    height: 8px;
}
.volume input {
    appearance: none;
    background: linear-gradient(#4a64b4, #4a64b4) center / 100% 3px no-repeat;
}
.volume input::-webkit-slider-thumb {
    appearance: none;
    width: 13px;
    height: 7px;
    border-radius: 3px;
    background: #fff;
}
.mixer-empty {
    flex: 1;
    background: #1f2023;
}

/* forms and buttons */
.form {
    display: flex;
    flex-direction: column;
    gap: 3px;
    padding: 4px 3px;
}
.btn {
    height: 21px;
    border-radius: 2px;
    background: #3c404b;
    text-align: center;
}
.btn.active {
    background: #2b47b8;
}
.pair {
    display: flex;
    gap: 3px;
}
.pair .btn {
    flex: 1;
}
.pair .btn + .btn {
    display: grid;
    place-items: center;
    flex: 0 0 21px;
}
.combo, .spin {
    display: flex;
    align-items: center;
    height: 21px;
    border-radius: 2px;
    background: #3c404b;
}
.combo select {
    flex: 1;
    height: 21px;
    padding-left: 5px;
    border-right: 1px solid #272a33;
}
.combo .caret {
    margin: 0 5px;
}
.duration {
    display: flex;
    align-items: center;
    gap: 2px;
}
.spin {
    flex: 1;
}
.spin input {
    flex: 1;
    min-width: 0;
    height: 21px;
    padding-left: 8px;
}
.arrows {
    display: flex;
    flex-direction: column;
    width: 16px;
    border-left: 1px solid #272a33;
}
.arrows button {
    display: grid;
    place-items: center;
    height: 10px;
}
.arrows button + button {
    height: 11px;
    border-top: 1px solid #272a33;
}
.arrows svg {
    width: 8px;
    height: 8px;
}
.form-tools {
    display: flex;
    justify-content: flex-end;
    gap: 3px;
}
.form-tools button {
    padding: 2px;
    border-radius: 2px;
}
.form-tools svg {
    width: 13px;
    height: 13px;
}
.filled {
    background: #3c404b;
}
.watermark {
    position: absolute;
    bottom: 11px;
    left: -8px;
    display: flex;
    flex-direction: column;
    color: #7c7e86;
    white-space: nowrap;
}
.watermark strong {
    font-size: 13px;
    font-weight: 400;
    line-height: 17px;
}

/* status bar */
.status {
    display: flex;
    justify-content: flex-end;
    height: 22px;
    padding-right: 6px;
    border-top: 2px solid #1c1e25;
    background: #262932;
}
.status span {
    display: flex;
    align-items: center;
    gap: 2px;
    padding: 0 3px 0 2px;
    border-left: 1px solid #1c1e25;
}
.status .off {
    color: #6e7077;
}

/* taskbar */
.taskbar {
    display: grid;
    grid-template-columns: 1fr auto 1fr;
    height: 31px;
    background: linear-gradient(90deg, #d2f8dc, #d5f8cc 60px, #dcf5c4 105px, #d8eedd 150px, #dcebf3 210px, #e3eef3 50%, #e1edf3 90%, #dcf5e6);
    color: #33383b;
}
.weather {
    display: flex;
    align-items: center;
    gap: 3px;
    padding-left: 8px;
    font-size: 8px;
    line-height: 11px;
}
.weather svg {
    width: 18px;
    height: 20px;
}
.weather div, .clock {
    display: flex;
    flex-direction: column;
}
.weather span + span {
    color: #5e676b;
}
.apps {
    display: flex;
    align-items: center;
    justify-content: space-between;
    width: 560px;
    margin-right: 4px;
}
.apps button {
    position: relative;
    display: grid;
    place-items: center;
    width: 25px;
    height: 25px;
    margin: 0 2px;
    border-radius: 3px;
}
.apps button svg {
    width: 16px;
    height: 16px;
}
.apps .open::after, .apps .current::after {
    content: "";
    position: absolute;
    bottom: 0;
    left: 11px;
    width: 4px;
    height: 2px;
    border-radius: 1px;
    background: #7d8488;
}
.apps .current {
    background: #f5f9fa;
}
.apps .current svg {
    width: 18px;
    height: 18px;
}
.apps .current::after {
    left: 8px;
    width: 10px;
    background: #1b7bb8;
}
.badge em {
    position: absolute;
    top: 1px;
    right: -1px;
    padding: 0 1px;
    border-radius: 5px;
    background: #c93a45;
    color: #fff;
    font-size: 7px;
    font-style: normal;
    line-height: 9px;
}
.search {
    display: flex;
    align-items: center;
    gap: 5px;
    width: 146px;
    height: 21px;
    margin: 0 1px;
    padding: 0 4px 0 7px;
    border-radius: 11px;
    background: #f8fbfc;
}
.search input {
    flex: 1;
    min-width: 0;
}
.search input::placeholder {
    color: #666c70;
    opacity: 1;
}
.search .manatee {
    width: 28px;
    height: 16px;
}
.tray {
    display: flex;
    align-items: center;
    justify-content: flex-end;
    gap: 4px;
    padding-right: 13px;
    font-size: 8px;
}
.tray svg:nth-child(-n+3) {
    margin-right: 5px;
}
.tray span {
    margin-right: 8px;
}
.tray .clock {
    margin-left: 5px;
    line-height: 11px;
    text-align: right;
}
.tray .clock span {
    margin: 0;
}

/* floating windows */
.dialog {
    position: absolute;
    top: 199px;
    left: 368px;
    width: 524px;
    height: 256px;
    border: 1px solid #3a3c42;
    border-top: 0;
    border-radius: 5px;
    background: #1d1e23;
    overflow: hidden;
}
.dialog header {
    display: flex;
    align-items: center;
    gap: 4px;
    height: 20px;
    padding: 0 5px;
    background: #f4f4f5;
    color: #8e8f93;
    font-size: 8px;
}
.dialog header button {
    margin-left: auto;
}
.dialog header button svg {
    width: 8px;
    height: 8px;
}
.dialog-body {
    padding: 8px 7px 8px 6px;
}
.help p {
    display: flex;
    justify-content: space-between;
    margin: 0;
    padding-right: 8px;
}
.table-box {
    height: 163px;
    margin-top: 4px;
    background: #272a31;
}
.table-box table {
    width: 100%;
    border-collapse: collapse;
    table-layout: fixed;
}
.table-box th {
    height: 22px;
    padding: 0;
    border-right: 1px solid #1d1e23;
    background: #3c404b;
    font-weight: 400;
}
.table-box td {
    height: 17px;
    padding: 0 2px;
    border: 1px solid #484b55;
    border-left: 0;
}
.table-box .edit {
    background: #17181c;
}
.table-box .del {
    width: 16px;
}
.table-box .del button {
    display: block;
}
.dialog-buttons {
    display: flex;
    justify-content: flex-end;
    gap: 4px;
    margin-top: 7px;
}
.dialog-buttons .btn {
    width: 49px;
}
.grip {
    position: absolute;
    right: 1px;
    bottom: 1px;
    width: 6px;
    height: 6px;
}
.popup {
    position: absolute;
    top: 124px;
    left: 483px;
    width: 306px;
    height: 420px;
    border-radius: 2px;
    background: #fff;
    color: #222;
}
.popup header {
    display: flex;
    align-items: center;
    justify-content: space-between;
    height: 19px;
    padding-left: 6px;
    background: #f1f2f5;
}
.popup header button {
    display: grid;
    place-items: center;
    width: 13px;
    height: 13px;
    background: #b43f4f;
}
.popup header svg {
    width: 6px;
    height: 6px;
}
.cursor {
    position: absolute;
    top: 236px;
    left: 584px;
    width: 8px;
    height: 13px;
}
```
